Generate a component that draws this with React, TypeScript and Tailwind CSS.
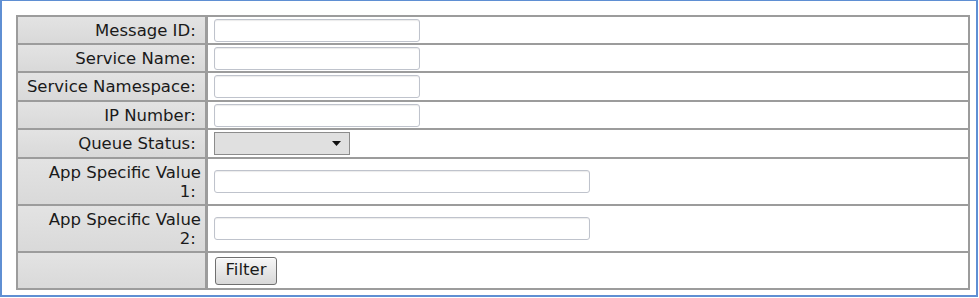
const fields = [
  { label: "Message ID:", kind: "short" },
  { label: "Service Name:", kind: "short" },
  { label: "Service Namespace:", kind: "short" },
  { label: "IP Number:", kind: "short" },
  { label: "Queue Status:", kind: "select" },
  { label: "App Specific Value", more: "1:", kind: "long" },
  { label: "App Specific Value", more: "2:", kind: "long" },
];

const TextBox = ({ wide }: { wide?: boolean }) => (
  <input
    type="text"
    className={`h-[23px] rounded-[3px] border border-[#bfc3cc] bg-white shadow-[inset_0_1px_1px_rgba(0,0,0,0.08)] outline-none ${
      wide ? "w-[376px]" : "w-[206px]"
    }`}
  />
);

const StatusSelect = () => (
  <div className="relative flex h-[23px] w-[136px] items-center justify-end border border-[#8c8c8c] bg-[#e0e0e0] pr-[8px]">
    <svg width="9" height="5" viewBox="0 0 9 5">
      <path d="M0 0h9L4.5 5z" fill="#111" />
    </svg>
  </div>
);

const LabelCell = ({ children, rowClass }: { children?: React.ReactNode; rowClass: string }) => (
  <div
    className={`flex items-center justify-end border-r-[3px] border-[#9c9c9c] bg-gradient-to-b from-[#e3e3e3] to-[#d9d9d9] pr-[4px] pl-2 text-right leading-[19px] ${rowClass}`}
  >
    <span>{children}</span>
  </div>
);

export default function App() {
  return (
    <div className="h-[297px] w-[978px] border-t border-r-2 border-b-2 border-l-2 border-[#5f8fd3] bg-white pt-[14px] pl-[14px] font-['DejaVu_Sans',Verdana,sans-serif] text-[16.5px] text-[#1a1a1a]">
      <div className="w-[954px] border-2 border-[#9c9c9c]">
        {fields.map((f, i) => {
          const tall = f.kind === "long";
          const h = tall ? "h-[45px]" : i === 2 || i === 4 ? "h-[27px]" : "h-[26px]";
          return (
            <div key={f.label + i} className="grid grid-cols-[190px_1fr] border-b-2 border-[#9c9c9c]">
              <LabelCell rowClass={h}>
                {f.more ? (
                  <>
                    {f.label}
                    <br />
                    {f.more}&nbsp;
                  </>
                ) : (
                  <>{f.label}&nbsp;</>
                )}
              </LabelCell>
              <div className={`flex items-center pl-[6px] ${h}`}>
                {f.kind === "select" ? <StatusSelect /> : <TextBox wide={tall} />}
              </div>
            </div>
          );
        })}
        <div className="grid grid-cols-[190px_1fr]">
          <LabelCell rowClass="h-[35px]" />
          <div className="flex h-[35px] items-center pl-[7px]">
            <button className="h-[28px] w-[62px] rounded-[3px] border border-[#707070] bg-gradient-to-b from-[#f7f7f7] to-[#d8d8d8] text-[16.5px] text-[#1a1a1a] shadow-[inset_0_1px_0_#fff]">
              Filter
            </button>
          </div>
        </div>
      </div>
    </div>
  );
}
